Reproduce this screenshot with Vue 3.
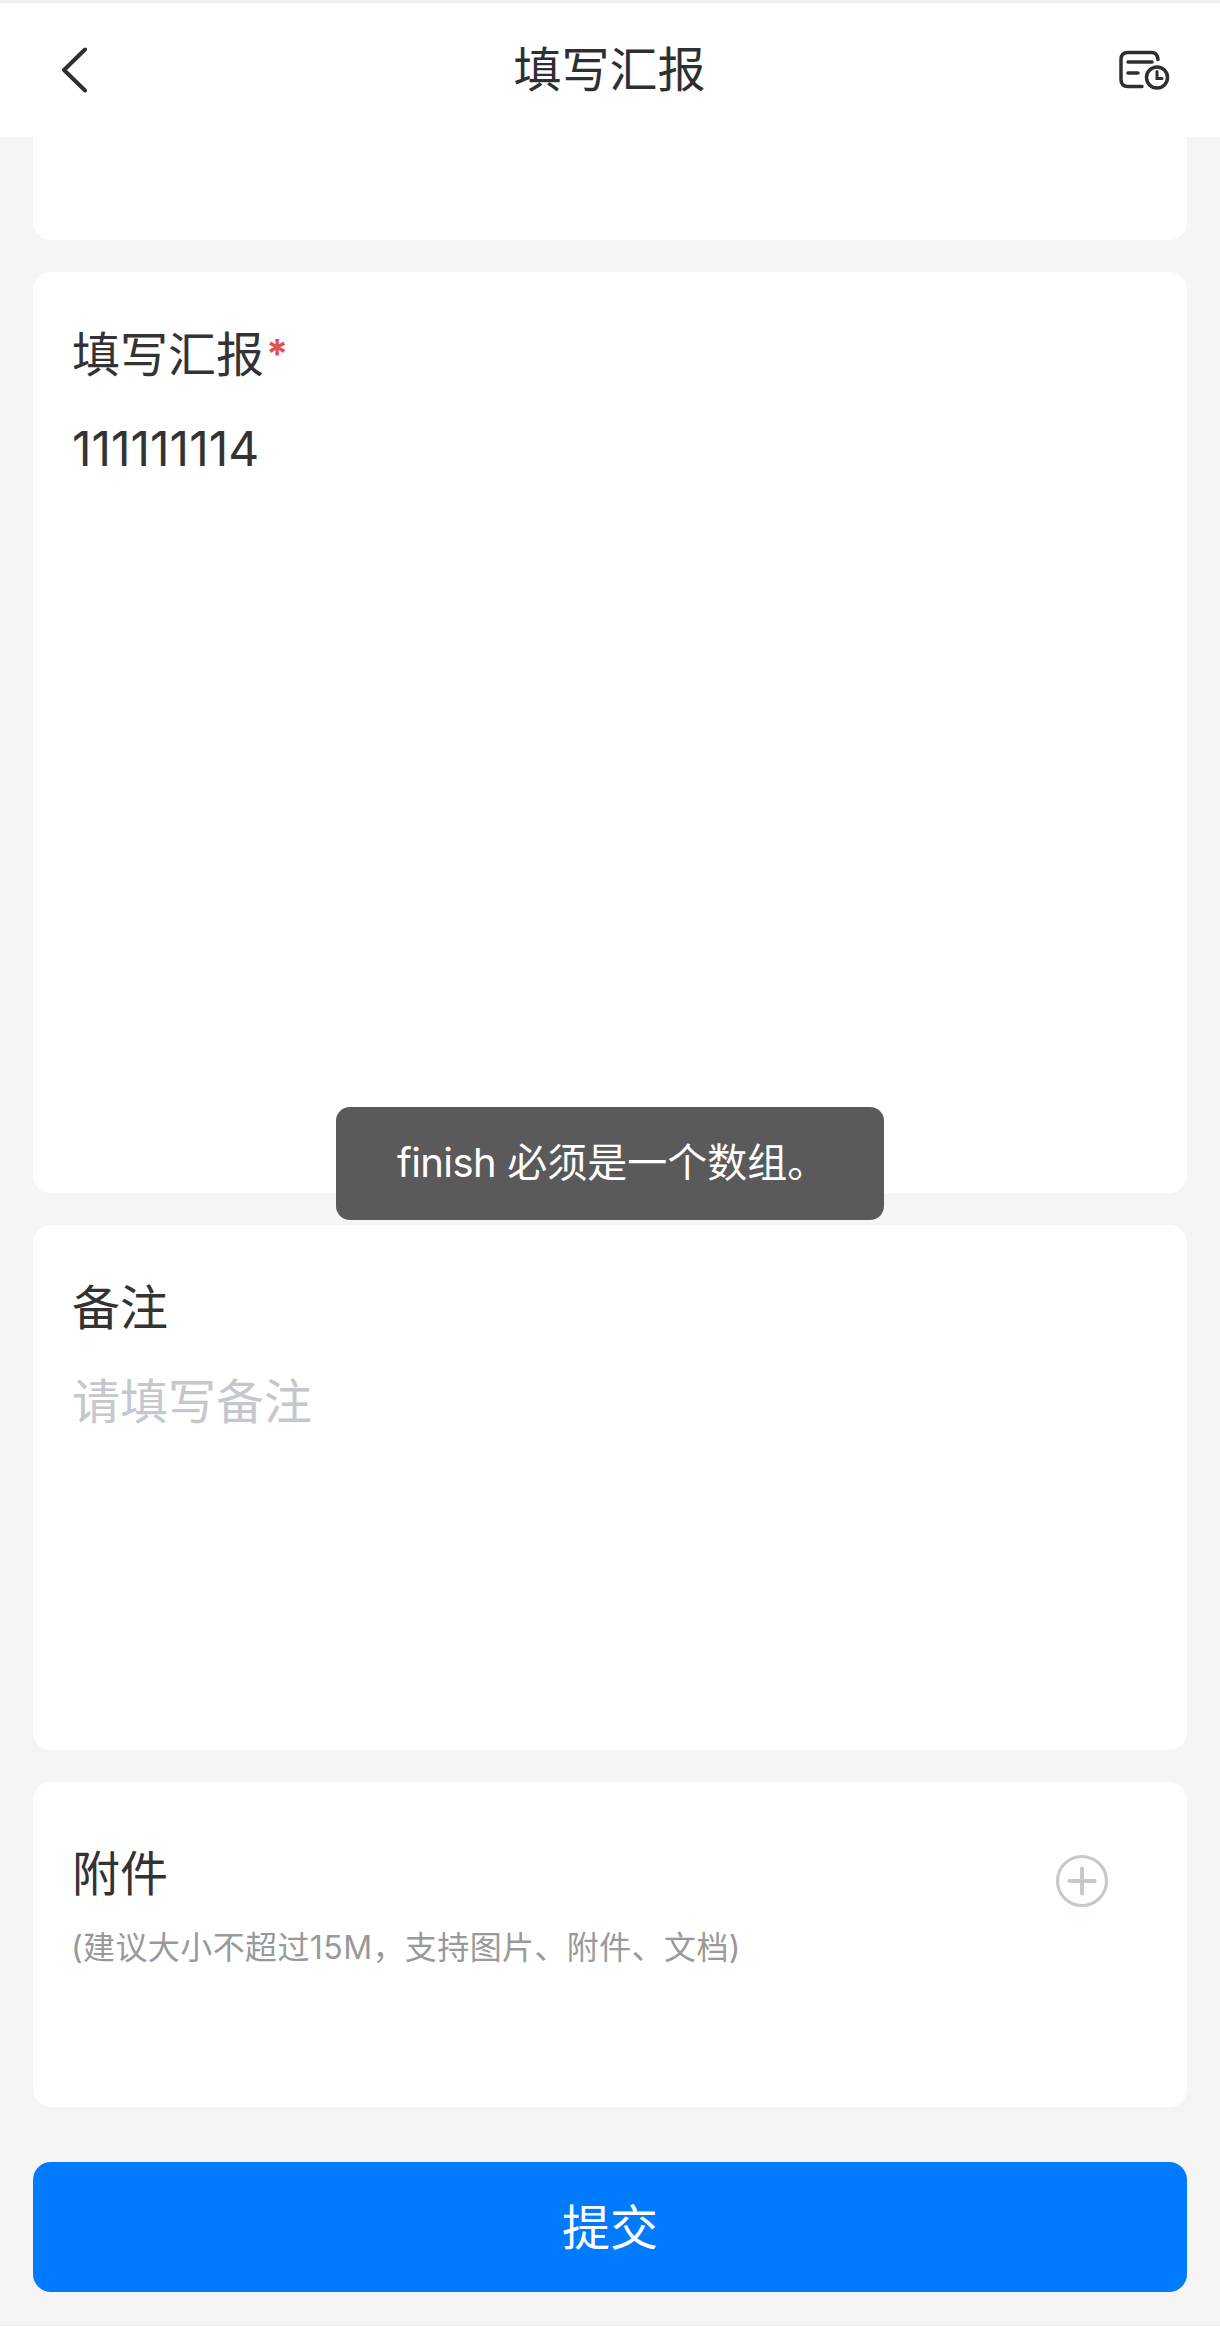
<template>
  <div class="page">
    <header class="nav">
      <svg class="nav__back" width="28" height="46" viewBox="0 0 28 46" fill="none">
        <path d="M25 2.5 L4 23 L25 43.5" stroke="#2e2f33" stroke-width="4" stroke-linecap="round" stroke-linejoin="round" />
      </svg>
      <h1 class="nav__title">{{ title }}</h1>
      <svg class="nav__history" width="52" height="40" viewBox="0 0 52 40" fill="none" stroke="#2e2f33" stroke-width="3.5" stroke-linecap="round">
        <path d="M39 9.5 C38.5 4.5 36.5 2.5 32.5 2.5 H9 C4.5 2.5 2 5 2 9.5 V29.5 C2 34 4.5 36.5 9 36.5 H23" />
        <path d="M9 12 H33" />
        <path d="M9 23 H19" />
        <circle cx="38" cy="27.5" r="10.5" />
        <path d="M38 21.5 V28.5 H43" stroke-width="3" />
      </svg>
    </header>

    <main class="content">
      <section class="card card--clipped"></section>

      <section class="card card--report">
        <div class="label">{{ title }}<span class="label__required">*</span></div>
        <div class="value">111111114</div>
      </section>

      <section class="card card--remark">
        <div class="label">备注</div>
        <div class="placeholder">请填写备注</div>
      </section>

      <section class="card card--attach">
        <div class="attach__text">
          <div class="label">附件</div>
          <div class="hint">(建议大小不超过15M，支持图片、附件、文档)</div>
        </div>
        <svg class="attach__add" width="54" height="54" viewBox="0 0 54 54" fill="none" stroke="#c4c8cf" stroke-width="3" stroke-linecap="round">
          <circle cx="27" cy="27" r="24.5" />
          <path d="M14.5 27 H39.5" stroke-width="4" />
          <path d="M27 14.5 V39.5" stroke-width="4" />
        </svg>
      </section>

      <button class="submit" type="button">提交</button>
    </main>

    <div class="toast"><span class="toast__code">finish</span> 必须是一个数组。</div>
  </div>
</template>

<script setup>
const title = '填写汇报'
</script>

<style>
html,
body {
  margin: 0;
  background: #f5f5f5;
}
</style>

<style scoped>
.page {
  position: relative;
  width: 1220px;
  height: 2326px;
  overflow: hidden;
  box-sizing: border-box;
  border-top: 3px solid #eeeeee;
  border-bottom: 1px solid #eeeeee;
  background: #f5f5f5;
  font-family: Inter, "Noto Sans CJK SC", sans-serif;
  color: #333;
}

.nav {
  display: grid;
  grid-template-columns: 1fr auto 1fr;
  align-items: center;
  height: 134px;
  padding: 0 49px 0 60px;
  background: #fff;
}

.nav__title {
  margin: 0 0 0 -12px;
  font-size: 48px;
  font-weight: 400;
  line-height: 64px;
  color: #2e2f33;
}

.nav__history {
  justify-self: end;
}

.content {
  display: flex;
  flex-direction: column;
  gap: 32px;
  padding: 0 33px;
}

.card {
  box-sizing: border-box;
  background: #fff;
  border-radius: 18px;
  padding: 50px 39px 0;
}

.card--clipped {
  height: 103px;
  padding: 0;
  border-radius: 0 0 18px 18px;
}

.card--report {
  height: 921px;
}

.card--remark {
  height: 525px;
  padding-top: 51px;
}

.card--attach {
  display: flex;
  justify-content: space-between;
  align-items: flex-start;
  height: 325px;
  padding-top: 60px;
  padding-right: 78px;
}

.label {
  font-size: 48px;
  line-height: 64px;
}

.label__required {
  margin-left: 2px;
  color: #e25050;
  font-size: 40px;
  font-weight: 700;
  vertical-align: 4px;
}

.value {
  margin-top: 30px;
  font-size: 48px;
  line-height: 64px;
}

.placeholder {
  margin-top: 30px;
  font-size: 48px;
  line-height: 64px;
  color: #c4c7cd;
}

.hint {
  margin: 20px 0 0 -1px;
  font-size: 32px;
  line-height: 44px;
  letter-spacing: 0.4px;
  color: #999;
}

.attach__add {
  margin-top: 12px;
}

.submit {
  display: block;
  width: 100%;
  height: 130px;
  margin-top: 23px;
  padding: 0 0 6px;
  border: 0;
  border-radius: 18px;
  background: #007aff;
  color: #fff;
  font-family: inherit;
  font-size: 48px;
}

.toast {
  position: absolute;
  left: 336px;
  top: 1104px;
  box-sizing: border-box;
  width: 548px;
  height: 113px;
  padding-left: 61px;
  border-radius: 14px;
  background: #5a5a5a;
  color: #fff;
  font-size: 40px;
  line-height: 111px;
  white-space: nowrap;
}

.toast__code {
  letter-spacing: -0.6px;
}
</style>
